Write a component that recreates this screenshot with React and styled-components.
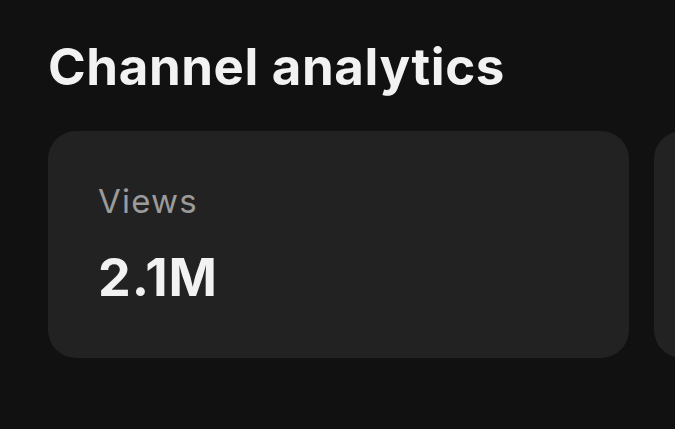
import React from "react";
import styled, { createGlobalStyle } from "styled-components";

const Global = createGlobalStyle`
  html, body { margin: 0; padding: 0; background: #111111; }
  body { font-family: Inter, "Noto Sans", sans-serif; -webkit-font-smoothing: antialiased; }
`;

const Page = styled.div`
  width: 675px;
  height: 429px;
  overflow: hidden;
  box-sizing: border-box;
  padding: 36px 0 0 48px;
  background: #111111;
`;

const Title = styled.h1`
  margin: 0;
  font-size: 51px;
  font-weight: 700;
  line-height: 62px;
  letter-spacing: 0.6px;
  color: #f2f2f2;
`;

const Row = styled.div`
  display: flex;
  gap: 25px;
  margin-top: 33px;
`;

const Card = styled.div`
  flex: 0 0 581px;
  height: 227px;
  box-sizing: border-box;
  border-radius: 28px;
  background: #222222;
  padding: 50px 50px;
  display: flex;
  flex-direction: column;
`;

const Label = styled.div`
  font-size: 33px;
  font-weight: 400;
  line-height: 40px;
  letter-spacing: 1.2px;
  color: #9b9b9b;
`;

const Value = styled.div`
  margin-top: 27px;
  font-size: 52px;
  font-weight: 700;
  line-height: 60px;
  letter-spacing: 0.9px;
  color: #f2f2f2;
`;

export default function App() {
  return (
    <Page>
      <Global />
      <Title>Channel analytics</Title>
      <Row>
        <Card>
          <Label>Views</Label>
          <Value>2.1M</Value>
        </Card>
        <Card aria-hidden="true" />
      </Row>
    </Page>
  );
}
